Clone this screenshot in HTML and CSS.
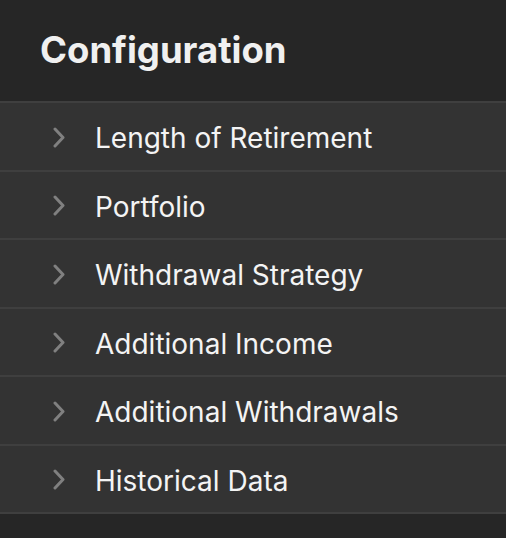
FILE: index.html
```html
<!DOCTYPE html>
<html>
<head>
<meta charset="utf-8">
<link rel="stylesheet" href="styles.css">
</head>
<body>
<div class="panel">
  <header class="header"><h1 class="title">Configuration</h1></header>
  <ul class="list">
    <li class="row"><svg class="chev" viewBox="0 0 12 21"><path d="M2 2 L10 10.5 L2 19"/></svg><span class="label">Length of Retirement</span></li>
    <li class="row"><svg class="chev" viewBox="0 0 12 21"><path d="M2 2 L10 10.5 L2 19"/></svg><span class="label">Portfolio</span></li>
    <li class="row"><svg class="chev" viewBox="0 0 12 21"><path d="M2 2 L10 10.5 L2 19"/></svg><span class="label">Withdrawal Strategy</span></li>
    <li class="row"><svg class="chev" viewBox="0 0 12 21"><path d="M2 2 L10 10.5 L2 19"/></svg><span class="label">Additional Income</span></li>
    <li class="row"><svg class="chev" viewBox="0 0 12 21"><path d="M2 2 L10 10.5 L2 19"/></svg><span class="label">Additional Withdrawals</span></li>
    <li class="row"><svg class="chev" viewBox="0 0 12 21"><path d="M2 2 L10 10.5 L2 19"/></svg><span class="label">Historical Data</span></li>
  </ul>
</div>
</body>
</html>
```
FILE: styles.css
```css
html, body {
  margin: 0;
  padding: 0;
  background: #262626;
  height: 100%;
}
body {
  font-family: Inter, "Noto Sans", sans-serif;
  color: #f2f2f2;
}
.panel {
  width: 506px;
}
.header {
  height: 101px;
  display: flex;
  align-items: center;
  padding-left: 40px;
  box-sizing: border-box;
}
.title {
  margin: 0;
  font-size: 36.5px;
  font-weight: 700;
  letter-spacing: 0;
  color: #f0f0f0;
  position: relative;
  top: -1px;
}
.list {
  list-style: none;
  margin: 0;
  padding: 0;
  border-top: 2px solid #3f3f3f;
}
.row {
  height: 66.5px;
  background: #333333;
  border-bottom: 2px solid #3f3f3f;
  display: flex;
  align-items: center;
  padding-left: 53px;
}
.chev {
  width: 12px;
  height: 21px;
  fill: none;
  stroke: #808080;
  stroke-width: 3;
  stroke-linecap: round;
  stroke-linejoin: round;
  margin-right: 30px;
  margin-top: 2px;
}
.label {
  font-size: 28px;
  font-weight: 400;
  color: #f4f4f4;
  margin-top: 4px;
}
```
